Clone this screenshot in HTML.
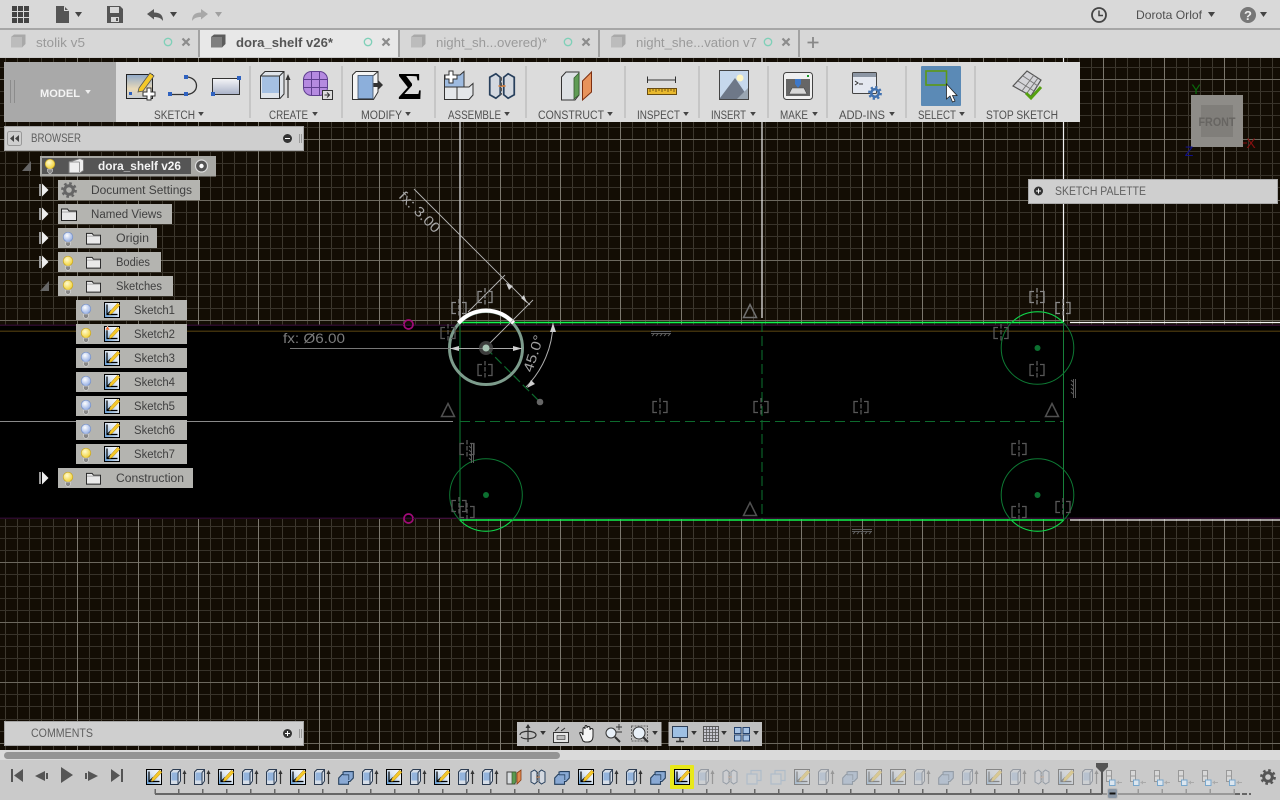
<!DOCTYPE html>
<html><head><meta charset="utf-8"><title>dora_shelf v26</title>
<style>
html,body{margin:0;padding:0;background:#000;overflow:hidden}
svg{display:block}
text{font-family:"Liberation Sans",sans-serif}
.tb{font-size:11.5px;fill:#505050}
.br{font-size:11.5px;fill:#404040}
.pn{font-size:11.5px;fill:#5f5f5f}
.dm{font-size:14px}
</style></head><body>
<svg width="1280" height="800" viewBox="0 0 1280 800" xmlns="http://www.w3.org/2000/svg">
<defs>
<linearGradient id="gs" x1="0" y1="1" x2="1" y2="0"><stop offset="0" stop-color="#5c9bd8"/><stop offset=".55" stop-color="#dfe8f2"/><stop offset="1" stop-color="#fff"/></linearGradient>
<linearGradient id="gt" x1="0" y1="0" x2="0" y2="1"><stop offset="0" stop-color="#f6f6f8"/><stop offset="1" stop-color="#a9b2c8"/></linearGradient>
<linearGradient id="gsk" x1="0" y1="0" x2="0" y2="1"><stop offset="0" stop-color="#8fa9c9"/><stop offset=".6" stop-color="#e9d9b8"/><stop offset="1" stop-color="#c4ccd4"/></linearGradient>
<radialGradient id="gby" cx=".4" cy=".35" r=".7"><stop offset="0" stop-color="#fffbd0"/><stop offset="1" stop-color="#f1cf2c"/></radialGradient>
<radialGradient id="gbb" cx=".4" cy=".35" r=".7"><stop offset="0" stop-color="#fff"/><stop offset="1" stop-color="#8ea9e2"/></radialGradient>

<symbol id="sk" viewBox="0 0 16 16"><rect x=".5" y=".5" width="15" height="15" fill="url(#gs)" stroke="#000"/><path d="M3 2.5V12.5H13.5" fill="none" stroke="#000" stroke-width="1.2"/><path d="M3.5 12L7 8.5" stroke="#000"/><path d="M6 9.5L13.5 1.2 16 3.2 8 11.5 5.5 12.5Z" fill="#f5c92a" stroke="#b08010" stroke-width=".5"/></symbol>
<symbol id="sk2" viewBox="0 0 16 16"><rect x=".5" y=".5" width="15" height="15" fill="url(#gs)" stroke="#000"/><path d="M3 2.5V12.5H13.5" fill="none" stroke="#000" stroke-width="1.2"/><path d="M6 9.5L13.5 1.2 16 3.2 8 11.5 5.5 12.5Z" fill="#f5c92a" stroke="#b08010" stroke-width=".5"/><path d="M1 4L3.5 0 6 4Z" fill="#e86a30" stroke="#fff" stroke-width=".5"/></symbol>
<symbol id="ex" viewBox="0 0 20 16"><path d="M.5 3L3 .5H10.5V12L8 15.5H.5Z" fill="#d6dee8" stroke="#2c3c52"/><path d="M1.5 3.5H8V11.500H1.500Z" fill="#94b4dc"/><path d="M8 3.500V15M8 3.500L10.500 .8" stroke="#2c3c52" fill="none"/><path d="M14.500 15V2.500" stroke="#333" stroke-width="1.200"/><path d="M12.500 5L14.500 1 16.500 5Z" fill="#333"/></symbol>
<symbol id="cb" viewBox="0 0 16 14"><path d="M.7 7L4 3.500H5V1L6.500 .6H15.300V7L12 10.500H10.500V13.300H.7Z" fill="#89a9d4" stroke="#25405f" stroke-width="1.100"/><path d="M5 3.800H10.800V9" fill="none" stroke="#25405f" stroke-width=".8"/></symbol>
<symbol id="cube2" viewBox="0 0 16 16"><rect x="5" y="1.500" width="10" height="10" fill="none" stroke="#7aa0c8" stroke-width="1.200"/><rect x="1" y="5" width="10" height="10" fill="#d0d4d8" stroke="#7aa0c8" stroke-width="1.200"/></symbol>
<symbol id="jt" viewBox="0 0 16 16"><path d="M1 3L4.500 1 7 3V13L4.500 15 1 13Z" fill="#d4d9e0" stroke="#28405c"/><path d="M9 3L11.500 1 15 3V13L11.500 15 9 13Z" fill="#d4d9e0" stroke="#28405c"/><path d="M6 8H10" stroke="#d08040"/><path d="M7.500 3V13" stroke="#555" stroke-dasharray="2 1"/></symbol>
<symbol id="cs" viewBox="0 0 16 16"><path d="M1 3H9V15H1Z" fill="#d9dde0" stroke="#444"/><path d="M6 3H10V13L8 15H6Z" fill="#5a9a50" stroke="#3a5a30" stroke-width=".7"/><path d="M11 4L15 1V11L11 15Z" fill="#e08a50" stroke="#8a3a10" stroke-width=".8"/></symbol>
<symbol id="grp" viewBox="0 0 18 16"><rect x=".5" y=".5" width="5" height="5.500" fill="#d8d8d8" stroke="#999"/><rect x=".5" y="6" width="5" height="5.500" fill="#d8d8d8" stroke="#999"/><rect x="3.500" y="10" width="5.500" height="5.500" fill="#dce6ef" stroke="#78a7cc"/><path d="M10.500 12.500H16" stroke="#aaa"/><path d="M13 10.500V14.500L10.500 12.500Z" fill="#aaa"/></symbol>
<symbol id="by" viewBox="0 0 12 16"><circle cx="6" cy="6" r="4.800" fill="url(#gby)" stroke="#c7a520" stroke-width=".7"/><path d="M3.500 11H8.500V13.500L7 15.500H5L3.500 13.500Z" fill="#888" stroke="#eee" stroke-width=".5"/></symbol>
<symbol id="bb" viewBox="0 0 12 16"><circle cx="6" cy="6" r="4.800" fill="url(#gbb)" stroke="#7490c8" stroke-width=".7"/><path d="M3.500 11H8.500V13.500L7 15.500H5L3.500 13.500Z" fill="#888" stroke="#eee" stroke-width=".5"/></symbol>
<symbol id="fo" viewBox="0 0 16 13"><path d="M.5 1H6.500L8 3H15.500V12.500H.5Z" fill="#e9e9e9" stroke="#222"/><path d="M1 4H15" stroke="#aaa"/></symbol>
<symbol id="tr" viewBox="0 0 10 14"><path d="M0 1H2V13H0Z" fill="#999"/><path d="M3 0.500L9.500 7 3 13.500Z" fill="#eee"/></symbol>
<symbol id="c" viewBox="0 0 16 18"><g fill="none" stroke="currentColor" stroke-width="1.300"><path d="M5 3.500H1V14.500H5M11 3.500H15V14.500H11"/><path d="M8 0V18" stroke-dasharray="4.500 1.500"/></g></symbol>
<symbol id="cube" viewBox="0 0 16 14"><path d="M1 3L4 .5H15.500V10L12 13.500H1Z" fill="currentColor"/><path d="M1 3H12V13.500H1Z" fill="#fff" fill-opacity=".22"/></symbol>
<symbol id="gear" viewBox="0 0 16 16"><circle cx="8" cy="8" r="6.700" fill="none" stroke="currentColor" stroke-width="2.400" stroke-dasharray="2.600 2.660"/><circle cx="8" cy="8" r="4.300" fill="none" stroke="currentColor" stroke-width="3"/></symbol>
<symbol id="dn" viewBox="0 0 7 5"><path d="M0 0H7L3.500 5Z" fill="currentColor"/></symbol>
</defs>

<!-- canvas -->
<rect x="0" y="58" width="1280" height="692" fill="#130d04"/>
<path stroke="#3d382e" fill="none" d="M5.500 58V750M17.500 58V750M29.500 58V750M41.500 58V750M53.500 58V750M65.500 58V750M89.500 58V750M101.500 58V750M113.500 58V750M126.500 58V750M150.500 58V750M162.500 58V750M174.500 58V750M186.500 58V750M210.500 58V750M222.500 58V750M234.500 58V750M246.500 58V750M270.500 58V750M282.500 58V750M295.500 58V750M307.500 58V750M331.500 58V750M343.500 58V750M355.500 58V750M367.500 58V750M391.500 58V750M403.500 58V750M415.500 58V750M427.500 58V750M451.500 58V750M463.500 58V750M476.500 58V750M488.500 58V750M512.500 58V750M524.500 58V750M536.500 58V750M548.500 58V750M572.500 58V750M584.500 58V750M596.500 58V750M608.500 58V750M632.500 58V750M645.500 58V750M657.500 58V750M669.500 58V750M693.500 58V750M705.500 58V750M717.500 58V750M729.500 58V750M753.500 58V750M765.500 58V750M777.500 58V750M789.500 58V750M814.500 58V750M826.500 58V750M838.500 58V750M850.500 58V750M874.500 58V750M886.500 58V750M898.500 58V750M910.500 58V750M934.500 58V750M946.500 58V750M958.500 58V750M970.500 58V750M995.500 58V750M1007.500 58V750M1019.500 58V750M1031.500 58V750M1055.500 58V750M1067.500 58V750M1079.500 58V750M1091.500 58V750M1115.500 58V750M1127.500 58V750M1139.500 58V750M1151.500 58V750M1176.500 58V750M1188.500 58V750M1200.500 58V750M1212.500 58V750M1236.500 58V750M1248.500 58V750M1260.500 58V750M1272.500 58V750"/>
<path stroke="#38332a" fill="none" d="M0 67.500H1280M0 91.500H1280M0 103.500H1280M0 115.500H1280M0 127.500H1280M0 151.500H1280M0 163.500H1280M0 175.500H1280M0 187.500H1280M0 212.500H1280M0 224.500H1280M0 236.500H1280M0 248.500H1280M0 272.500H1280M0 284.500H1280M0 296.500H1280M0 308.500H1280M0 526.500H1280M0 538.500H1280M0 550.500H1280M0 574.500H1280M0 586.500H1280M0 598.500H1280M0 610.500H1280M0 634.500H1280M0 646.500H1280M0 658.500H1280M0 670.500H1280M0 694.500H1280M0 706.500H1280M0 719.500H1280M0 731.500H1280"/>
<path stroke="#6c685e" fill="none" d="M0 79.500H1280M0 139.500H1280M0 200.500H1280M0 260.500H1280M0 320.500H1280M0 562.500H1280M0 622.500H1280M0 682.500H1280M0 743.500H1280"/>
<path stroke="#7c786e" fill="none" d="M77.500 58V750M138.500 58V750M198.500 58V750M258.500 58V750M319.500 58V750M379.500 58V750M439.500 58V750M500.500 58V750M560.500 58V750M620.500 58V750M681.500 58V750M741.500 58V750M801.500 58V750M862.500 58V750M922.500 58V750M983.500 58V750M1043.500 58V750M1103.500 58V750M1164.500 58V750M1224.500 58V750"/>
<rect x="0" y="326" width="1280" height="192" fill="#000"/>
<rect x="0" y="324.500" width="1280" height="1.500" fill="#2a0a2a"/>
<rect x="0" y="330.500" width="1280" height="1.500" fill="#3f300c"/>
<rect x="0" y="517.500" width="1280" height="1.500" fill="#2a0a2a"/>

<!-- sketch lines -->
<g fill="none">
<path d="M460 58V322" stroke="#c0c0c0" stroke-width="1.500"/>
<path d="M762 58V318M1063.500 58V322" stroke="#f0f0f0" stroke-width="1.200"/>
<path d="M0 421.500H453" stroke="#8a8a8a"/>
<path d="M1070 322.500H1280M1070 520H1280" stroke="#f4f4f4" stroke-width="1.300"/>
<path d="M460 322V520" stroke="#0c6a2c" stroke-width="1.200"/>
<path d="M1063.500 322V520" stroke="#17803a"/>
<path d="M762 322V520" stroke="#0c6a2c" stroke-dasharray="10 4" stroke-width="1.100"/>
<path d="M460 421.500H1063" stroke="#0d6a2d" stroke-dasharray="10 5"/>
<path d="M460 322.500H1063M460 520H1063" stroke="#10f44e" stroke-width="1.600"/>
<circle cx="1037.500" cy="348" r="36.300" stroke="#0e7a34"/>
<circle cx="486" cy="495" r="36.300" stroke="#0e7a34"/>
<circle cx="1037.500" cy="495" r="36.300" stroke="#0e7a34"/>
<path d="M459.700 520A36.300 36.300 0 0 0 512.300 520M1011.200 520A36.300 36.300 0 0 0 1063.800 520" stroke="#10d84a"/>
<path d="M1011.700 322.500A36.300 36.300 0 0 1 1063.300 322.500" stroke="#10d84a"/>
<path d="M486 348L540 402" stroke="#0d6a2d" stroke-dasharray="9 4" stroke-width="1.200"/>
<circle cx="486" cy="348" r="36.500" stroke="#7d9c8c" stroke-width="3"/>
<path d="M458.500 323A36.500 36.500 0 0 1 513.500 323" stroke="#fff" stroke-width="4"/>
<path d="M414 189L530 305M505 275L468 312M533 300L490 343" stroke="#b4b4b4" stroke-width=".9"/>
<path d="M290 348.500H450" stroke="#777"/>
<path d="M450 348.500H522" stroke="#aaa"/>
<path d="M553 323A93 93 0 0 1 526 387" stroke="#b0b0b0"/>
<circle cx="408.500" cy="324.500" r="4.500" stroke="#a00a78" stroke-width="1.700"/>
<circle cx="408.500" cy="518.500" r="4.500" stroke="#a00a78" stroke-width="1.700"/>
<path d="M404 324.500H390M413 518.500H456" stroke="#40103a"/>
</g>
<g fill="#cfcfcf">
<path d="M506 283L513 286 509 290Z M527 303L521 298 524 295Z"/>
<path d="M450 348.500L459 346V351Z M522 348.500L513 346V351Z"/>
<path d="M553 323L550 332H556Z M527 388L531 380 535 384Z"/>
</g>
<circle cx="486" cy="348" r="7" fill="#555" opacity=".7"/><circle cx="486" cy="348" r="3.500" fill="#a8c4b4"/>
<circle cx="540" cy="402" r="3.300" fill="#666"/>
<g fill="#0c7030"><circle cx="1037.500" cy="348" r="3"/><circle cx="486" cy="495" r="3"/><circle cx="1037.500" cy="495" r="3"/></g>

<g color="#8a8a8a">
<use href="#c" x="477" y="288" width="16" height="18"/><use href="#c" x="451" y="299" width="16" height="18"/>
<use href="#c" x="1029" y="288" width="16" height="18"/><use href="#c" x="1055" y="299" width="16" height="18"/>
</g>
<g color="#585858">
<use href="#c" x="440" y="324" width="16" height="18"/><use href="#c" x="477" y="361" width="16" height="18"/>
<use href="#c" x="993" y="324" width="16" height="18"/><use href="#c" x="1029" y="361" width="16" height="18"/>
<use href="#c" x="652" y="398" width="16" height="18"/><use href="#c" x="753" y="398" width="16" height="18"/><use href="#c" x="853" y="398" width="16" height="18"/>
<use href="#c" x="459" y="440" width="16" height="18"/><use href="#c" x="451" y="497" width="16" height="18"/><use href="#c" x="459" y="503" width="16" height="18"/>
<use href="#c" x="1011" y="440" width="16" height="18"/><use href="#c" x="1011" y="503" width="16" height="18"/><use href="#c" x="1055" y="498" width="16" height="18"/>
</g>
<g fill="none" stroke="#505050" stroke-width="1.500">
<path d="M750 304.500L756.500 317.500H743.500Z" stroke="#707070"/>
<path d="M448 403.500L454.500 416.500H441.500Z"/><path d="M1052 403.500L1058.500 416.500H1045.500Z"/><path d="M750 502.500L756.500 515.500H743.500Z"/>
</g>
<g stroke="#5c5c5c" fill="none">
<path d="M651 331.500H671M651 333.500H671M652 336L654 334M656 336L658 334M660 336L662 334M664 336L666 334M668 336L670 334"/>
<path d="M852 529.500H872M852 531.500H872M853 534L855 532M857 534L859 532M861 534L863 532M865 534L867 532M869 534L871 532"/>
<path d="M1075.500 379V398M1073.500 379V398M1071 380L1073 382M1071 384L1073 386M1071 388L1073 390M1071 392L1073 394"/>
<path d="M473.500 443V463M471.500 443V463M469 446L471 448M469 450L471 452M469 454L471 456M469 458L471 460"/>
</g>

<text class="dm" x="283" y="343" textLength="62" lengthAdjust="spacingAndGlyphs" fill="#7c7c7c">fx: Ø6.00</text>
<text class="dm" transform="translate(398 197) rotate(45)" textLength="52" lengthAdjust="spacingAndGlyphs" fill="#a8a8a8">fx: 3.00</text>
<text class="dm" transform="translate(532 373) rotate(-72)" textLength="38" lengthAdjust="spacingAndGlyphs" fill="#a0a0a0">45.0°</text>

<!-- view cube -->
<rect x="1191" y="95" width="52" height="52" fill="#8e8c88"/>
<rect x="1201" y="105" width="32" height="32" fill="#807e7a"/>
<text x="1217" y="126" text-anchor="middle" font-size="12" font-weight="bold" fill="#676562" textLength="37" lengthAdjust="spacingAndGlyphs">FRONT</text>
<text x="1196" y="94" font-size="14" fill="#0a6a0a" text-anchor="middle">Y</text>
<text x="1251" y="148" font-size="14" fill="#8a1010" text-anchor="middle">X</text>
<text x="1189" y="156" font-size="14" fill="#10108a" text-anchor="middle">Z</text>
<path d="M1243 143H1247" stroke="#8a1010"/>

<!-- top bar -->
<rect x="0" y="0" width="1280" height="28" fill="#d9d9d9"/>
<rect x="0" y="28" width="1280" height="2" fill="#a6a6a6"/>
<rect x="0" y="30" width="1280" height="27" fill="#d7d7d7"/>
<rect x="200" y="30" width="198" height="27" fill="#e8e8e8"/>
<rect x="0" y="57" width="1280" height="1" fill="#fff" opacity=".8"/>
<g fill="#a2a2a2"><rect x="198" y="30" width="2" height="27"/><rect x="398" y="30" width="2" height="27"/><rect x="598" y="30" width="2" height="27"/><rect x="798" y="30" width="2" height="27"/></g>
<g fill="#444"><rect x="12" y="6" width="5" height="5"/><rect x="18" y="6" width="5" height="5"/><rect x="24" y="6" width="5" height="5"/><rect x="12" y="12" width="5" height="5"/><rect x="18" y="12" width="5" height="5"/><rect x="24" y="12" width="5" height="5"/><rect x="12" y="18" width="5" height="5"/><rect x="18" y="18" width="5" height="5"/><rect x="24" y="18" width="5" height="5"/></g>
<path d="M56 6H64L69 11V23H56Z" fill="#555"/><path d="M64.500 6.500V10.500H68.500" fill="none" stroke="#ddd"/>
<use href="#dn" x="75" y="12" width="7" height="5" color="#444"/>
<path d="M107 6H120L123 9V23H107Z" fill="#555"/><rect x="110" y="7" width="9" height="6" fill="#d9d9d9"/><rect x="111" y="17" width="8" height="5" fill="#d9d9d9"/><rect x="116" y="18" width="2" height="3" fill="#555"/>
<path d="M147 14L154 9V12.500C160 12.500 163 15 163 21 161 18 158 17 154 17V19.500Z" fill="#555"/>
<use href="#dn" x="170" y="12" width="7" height="5" color="#444"/>
<path d="M208 14L201 9V12.500C195 12.500 192 15 192 21 194 18 197 17 201 17V19.500Z" fill="#a8a8a8"/>
<use href="#dn" x="215" y="12" width="7" height="5" color="#a0a0a0"/>
<circle cx="1099" cy="15" r="7" fill="none" stroke="#444" stroke-width="1.800"/><path d="M1099 10.500V15.500H1103" fill="none" stroke="#444" stroke-width="1.500"/>
<text x="1136" y="19" class="tb" style="font-size:12px" textLength="66" lengthAdjust="spacingAndGlyphs">Dorota Orlof</text>
<use href="#dn" x="1208" y="12" width="7" height="5" color="#444"/>
<circle cx="1248" cy="15" r="8" fill="#777"/><text x="1248" y="20" font-size="13" font-weight="bold" text-anchor="middle" fill="#eee">?</text>
<use href="#dn" x="1260" y="12" width="7" height="5" color="#444"/>

<!-- tabs -->
<use href="#cube" x="10" y="34" width="16" height="14" color="#a9a9a9"/>
<text x="36" y="47" font-size="12.500" fill="#9a9a9a" textLength="49" lengthAdjust="spacingAndGlyphs">stolik v5</text>
<use href="#cube" x="210" y="34" width="16" height="14" color="#5c5c5c"/>
<text x="236" y="47" font-size="12.500" font-weight="bold" fill="#555" textLength="97" lengthAdjust="spacingAndGlyphs">dora_shelf v26*</text>
<use href="#cube" x="410" y="34" width="16" height="14" color="#a9a9a9"/>
<text x="436" y="47" font-size="12.500" fill="#9a9a9a" textLength="111" lengthAdjust="spacingAndGlyphs">night_sh...overed)*</text>
<use href="#cube" x="610" y="34" width="16" height="14" color="#a9a9a9"/>
<text x="636" y="47" font-size="12.500" fill="#9a9a9a" textLength="121" lengthAdjust="spacingAndGlyphs">night_she...vation v7</text>
<g fill="none" stroke="#7fd0b8" stroke-width="1.300"><circle cx="168" cy="42" r="3.700"/><circle cx="368" cy="42" r="3.700"/><circle cx="568" cy="42" r="3.700"/><circle cx="768" cy="42" r="3.700"/></g>
<g fill="none" stroke="#8c8c8c" stroke-width="2.200"><path d="M182.500 38.500L189.500 45.500M189.500 38.500L182.500 45.500"/><path d="M382.500 38.500L389.500 45.500M389.500 38.500L382.500 45.500"/><path d="M582.500 38.500L589.500 45.500M589.500 38.500L582.500 45.500"/><path d="M782.500 38.500L789.500 45.500M789.500 38.500L782.500 45.500"/></g>
<path d="M813 37V48M807.500 42.500H818.500" stroke="#888" stroke-width="1.800"/>

<!-- toolbar -->
<rect x="4" y="62" width="1076" height="60" fill="#dcdcdc"/>
<rect x="4" y="62" width="112" height="60" fill="#a9a9a9"/>
<path d="M10.500 80V103M14.500 80V103" stroke="#8c8c8c"/>
<text x="40" y="97" font-size="11" font-weight="bold" fill="#f4f4f4" textLength="40" lengthAdjust="spacingAndGlyphs">MODEL</text>
<use href="#dn" x="85" y="90" width="6" height="4" color="#eee"/>
<g fill="#c6c6c6"><rect x="249" y="66" width="2" height="52"/><rect x="341" y="66" width="2" height="52"/><rect x="434" y="66" width="2" height="52"/><rect x="525" y="66" width="2" height="52"/><rect x="624" y="66" width="2" height="52"/><rect x="698" y="66" width="2" height="52"/><rect x="767" y="66" width="2" height="52"/><rect x="826" y="66" width="2" height="52"/><rect x="905" y="66" width="2" height="52"/><rect x="974" y="66" width="2" height="52"/></g>

<!-- sketch create -->
<rect x="126.500" y="74.500" width="26" height="24" fill="url(#gsk)" stroke="#222" stroke-width="1"/>
<rect x="129" y="92" width="3" height="3" fill="#2f62c0"/>
<path d="M139 88L150 73 154 76 143 91 138 92Z" fill="#f5c92a" stroke="#555" stroke-width=".8"/>
<path d="M147 88H151V92H155V96H151V100H147V96H143V92H147Z" fill="#fff" stroke="#333"/>
<path d="M171 94.500H186C200 94.500 200 77 186 77" fill="none" stroke="#333" stroke-width="1.300"/>
<g fill="#2f62c0"><rect x="168" y="92" width="4" height="4"/><rect x="184" y="92" width="4" height="4"/><rect x="184" y="75" width="4" height="4"/></g>
<rect x="212.500" y="78.500" width="27" height="16" fill="url(#gt)" stroke="#333"/>
<rect x="211" y="92" width="4" height="4" fill="#2f62c0"/><rect x="237" y="76" width="4" height="4" fill="#2f62c0"/>
<!-- create -->
<path d="M260.500 76L265 71.500H284V94L280 98.500H260.500Z" fill="#dfe4ea" stroke="#333"/>
<path d="M262 76H279V93H262Z" fill="#a5c0e2"/><path d="M279.500 76V98M279.500 76L284 71.500M260.500 76H279.500" stroke="#333" fill="none"/>
<path d="M288 98V77" stroke="#333" stroke-width="1.200"/><path d="M285.500 80L288 74 290.500 80Z" fill="#333"/>
<rect x="303.500" y="71.500" width="24" height="24" rx="8" fill="#b58ae0" stroke="#5f3f8f"/>
<path d="M303.500 79.500H327.500M303.500 87.500H327.500M311.500 71.500V95.500M319.500 71.500V95.500" stroke="#5f3f8f"/>
<rect x="322.500" y="90.500" width="10" height="9" fill="#ddd" stroke="#333"/><path d="M324.500 95H329M327 92.500L329.500 95 327 97.500" fill="none" stroke="#333"/>
<!-- modify -->
<path d="M352.500 75L356 71.500H378V92L373.500 99.500H352.500Z" fill="#f4f4f4" stroke="#333"/>
<rect x="358" y="75.500" width="15" height="23" fill="#8cafdb" stroke="#3c4e66" stroke-width=".8"/>
<path d="M373.500 75.500L378 71.500" stroke="#333"/><path d="M373.500 83H378V80L383 85 378 90V87H373.500Z" fill="#333"/>
<text x="410" y="99" font-size="38" font-weight="bold" text-anchor="middle" fill="#000" style="font-family:'Liberation Serif',serif">Σ</text>
<!-- assemble -->
<path d="M444.500 87H457V99.500H444.500Z" fill="#e4e7ea" stroke="#333"/>
<path d="M457 87H469L473 83.500V95L469 99.500H457Z" fill="#e4e7ea" stroke="#333"/>
<path d="M444.500 75H460L464 71.500V87H444.500Z" fill="#9ebbe0" stroke="#333"/>
<path d="M449 71H453V75H457V79H453V83H449V79H445V75H449Z" fill="#fff" stroke="#333"/>
<use href="#jt" x="488" y="72" width="28" height="28"/>
<!-- construct -->
<path d="M561.500 77L566 72H579V95L575 100H561.500Z" fill="#dde1e4" stroke="#333"/>
<path d="M574 78L579 73V95L574 99Z" fill="#5f9c55" stroke="#345a2f" stroke-width=".8"/>
<path d="M582.500 81L591.500 72V92L582.500 100Z" fill="#e8935c" stroke="#7e2f10"/>
<!-- inspect -->
<path d="M647.500 76.500V83M675.500 76.500V83M647.500 80H675.500" fill="none" stroke="#333"/>
<rect x="647.500" y="88.500" width="29" height="6" fill="#e9b92e" stroke="#6a4c10"/>
<path d="M650 89V92M653 89V91M656 89V92M659 89V91M662 89V92M665 89V91M668 89V92M671 89V91M674 89V92" stroke="#7c5a12"/>
<!-- insert -->
<rect x="719.500" y="70.500" width="29" height="29" fill="#c6d8ec" stroke="#444"/>
<path d="M720 98L735 78 748 97V99H720Z" fill="#6e7888"/><path d="M737 99L748 88V99Z" fill="#9aa6b2"/>
<circle cx="740" cy="78" r="3.500" fill="#fff7c4"/>
<!-- make -->
<rect x="783.500" y="72.500" width="29" height="27" rx="3" fill="#f0f0f0" stroke="#444"/>
<rect x="786" y="79" width="24" height="17" fill="#666"/>
<path d="M795 79H801V84L798 88 795 84Z" fill="#3e78c8"/><path d="M789 94L792 88H804L807 94Z" fill="#d8d8d8" stroke="#444" stroke-width=".6"/>
<rect x="807" y="75" width="2" height="2" fill="#1a9a2a"/>
<!-- add-ins -->
<rect x="852.500" y="72.500" width="24" height="21" rx="1" fill="#e4e8f0" stroke="#444"/><rect x="853" y="73" width="23" height="4" fill="#8c96a4"/>
<path d="M855 81L858 83 855 85M859 84H863" fill="none" stroke="#333"/>
<use href="#gear" x="868" y="86" width="14" height="14" color="#4272b0"/>
<!-- select -->
<rect x="921" y="66" width="40" height="40" fill="#5b8ab6" rx="1"/>
<rect x="926" y="71" width="20.500" height="14" fill="none" stroke="#5c9a14" stroke-width="1.600"/>
<path d="M946.500 84V99L950 96 952.500 102 955 101 952.500 95.500H957Z" fill="#fff" stroke="#222" stroke-width=".8"/>
<!-- stop -->
<path d="M1013 86L1027 71 1041 80 1031 96Z" fill="#d4d4d8" stroke="#555" stroke-width="1.200"/>
<path d="M1018 81L1034 91M1023 76L1038 86M1022 91L1034 75M1027 93L1038 78" stroke="#777"/>
<path d="M1026 93L1031 98 1041 87" fill="none" stroke="#55a010" stroke-width="3"/>
<!-- labels -->
<text x="154" y="119" class="tb" textLength="41" lengthAdjust="spacingAndGlyphs">SKETCH</text><use href="#dn" x="198" y="112" width="6" height="4" color="#444"/>
<text x="269" y="119" class="tb" textLength="39" lengthAdjust="spacingAndGlyphs">CREATE</text><use href="#dn" x="312" y="112" width="6" height="4" color="#444"/>
<text x="361" y="119" class="tb" textLength="41" lengthAdjust="spacingAndGlyphs">MODIFY</text><use href="#dn" x="405" y="112" width="6" height="4" color="#444"/>
<text x="448" y="119" class="tb" textLength="53" lengthAdjust="spacingAndGlyphs">ASSEMBLE</text><use href="#dn" x="504" y="112" width="6" height="4" color="#444"/>
<text x="538" y="119" class="tb" textLength="66" lengthAdjust="spacingAndGlyphs">CONSTRUCT</text><use href="#dn" x="607" y="112" width="6" height="4" color="#444"/>
<text x="637" y="119" class="tb" textLength="43" lengthAdjust="spacingAndGlyphs">INSPECT</text><use href="#dn" x="683" y="112" width="6" height="4" color="#444"/>
<text x="711" y="119" class="tb" textLength="35" lengthAdjust="spacingAndGlyphs">INSERT</text><use href="#dn" x="750" y="112" width="6" height="4" color="#444"/>
<text x="780" y="119" class="tb" textLength="28" lengthAdjust="spacingAndGlyphs">MAKE</text><use href="#dn" x="812" y="112" width="6" height="4" color="#444"/>
<text x="839" y="119" class="tb" textLength="46" lengthAdjust="spacingAndGlyphs">ADD-INS</text><use href="#dn" x="889" y="112" width="6" height="4" color="#444"/>
<text x="918" y="119" class="tb" textLength="38" lengthAdjust="spacingAndGlyphs">SELECT</text><use href="#dn" x="959" y="112" width="6" height="4" color="#444"/>
<text x="986" y="119" class="tb" textLength="72" lengthAdjust="spacingAndGlyphs">STOP SKETCH</text>

<!-- sketch palette -->
<rect x="1028.500" y="179.500" width="249" height="24" fill="#cfcfcf" stroke="#aaa"/>
<circle cx="1038.500" cy="191" r="4.500" fill="#333"/><path d="M1036 191H1041M1038.500 188.500V193.500" stroke="#fff"/>
<text x="1055" y="195" class="pn" textLength="91" lengthAdjust="spacingAndGlyphs">SKETCH PALETTE</text>

<!-- browser -->
<rect x="4.500" y="126.500" width="299" height="24" fill="#cfcfcf" stroke="#a6a6a6"/>
<rect x="7.500" y="131.500" width="14" height="14" rx="2" fill="none" stroke="#999"/>
<path d="M14 135V142L10 138.500ZM19 135V142L15 138.500Z" fill="#444"/>
<text x="31" y="142" class="pn" textLength="50" lengthAdjust="spacingAndGlyphs">BROWSER</text>
<circle cx="287.500" cy="138.500" r="4.500" fill="#333"/><path d="M285 138.500H290" stroke="#fff"/>
<path d="M299.500 134V143M301.500 134V143" stroke="#999"/>

<g fill="#b4b4b0">
<rect x="40" y="156" width="176" height="20.500" fill="#a8a8a4"/>
<rect x="58" y="180" width="142" height="20"/><rect x="58" y="204" width="114" height="20"/><rect x="58" y="228" width="99" height="20"/><rect x="58" y="252" width="103" height="20"/><rect x="58" y="276" width="115" height="20"/>
<rect x="76" y="300" width="111" height="20"/><rect x="76" y="324" width="111" height="20"/><rect x="76" y="348" width="111" height="20"/><rect x="76" y="372" width="111" height="20"/><rect x="76" y="396" width="111" height="20"/><rect x="76" y="420" width="111" height="20"/><rect x="76" y="444" width="111" height="20"/>
<rect x="58" y="468" width="135" height="20"/>
</g>
<rect x="42" y="158" width="149" height="16" fill="#555"/>
<path d="M22 171L31 161V171Z" fill="#666"/><path d="M40 291L49 281V291Z" fill="#666"/>
<use href="#by" x="44" y="158" width="12" height="16"/>
<path d="M69 162L80 158.500 83.500 160V170.500L80 173H69Z" fill="#eee" stroke="#777"/><path d="M79.500 162V172M69 162H79.500" stroke="#999"/>
<text x="98" y="170" font-size="11.500" font-weight="bold" fill="#f4f4f4" textLength="83" lengthAdjust="spacingAndGlyphs">dora_shelf v26</text>
<circle cx="201.500" cy="166" r="6" fill="#555" stroke="#ddd" stroke-width="1.200"/><circle cx="201.500" cy="166" r="2.200" fill="#fff"/>

<use href="#tr" x="39" y="183" width="10" height="14"/><use href="#tr" x="39" y="207" width="10" height="14"/><use href="#tr" x="39" y="231" width="10" height="14"/><use href="#tr" x="39" y="255" width="10" height="14"/><use href="#tr" x="39" y="471" width="10" height="14"/>
<use href="#gear" x="61" y="182" width="16" height="16" color="#666"/>
<use href="#fo" x="61" y="208" width="16" height="13"/>
<use href="#bb" x="62" y="231" width="12" height="16"/><use href="#fo" x="86" y="232" width="15" height="13"/>
<use href="#by" x="62" y="255" width="12" height="16"/><use href="#fo" x="86" y="256" width="15" height="13"/>
<use href="#by" x="62" y="279" width="12" height="16"/><use href="#fo" x="86" y="280" width="15" height="13"/>
<use href="#by" x="62" y="471" width="12" height="16"/><use href="#fo" x="86" y="472" width="15" height="13"/>
<use href="#bb" x="80" y="303" width="12" height="16"/><use href="#sk" x="104" y="302" width="16" height="16"/>
<use href="#by" x="80" y="327" width="12" height="16"/><use href="#sk2" x="104" y="326" width="16" height="16"/>
<use href="#bb" x="80" y="351" width="12" height="16"/><use href="#sk" x="104" y="350" width="16" height="16"/>
<use href="#bb" x="80" y="375" width="12" height="16"/><use href="#sk" x="104" y="374" width="16" height="16"/>
<use href="#bb" x="80" y="399" width="12" height="16"/><use href="#sk" x="104" y="398" width="16" height="16"/>
<use href="#bb" x="80" y="423" width="12" height="16"/><use href="#sk" x="104" y="422" width="16" height="16"/>
<use href="#by" x="80" y="447" width="12" height="16"/><use href="#sk" x="104" y="446" width="16" height="16"/>

<text class="br" x="91" y="194" textLength="101" lengthAdjust="spacingAndGlyphs">Document Settings</text>
<text class="br" x="91" y="218" textLength="71" lengthAdjust="spacingAndGlyphs">Named Views</text>
<text class="br" x="116" y="242" textLength="33" lengthAdjust="spacingAndGlyphs">Origin</text>
<text class="br" x="116" y="266" textLength="34" lengthAdjust="spacingAndGlyphs">Bodies</text>
<text class="br" x="116" y="290" textLength="46" lengthAdjust="spacingAndGlyphs">Sketches</text>
<text class="br" x="134" y="314" textLength="41" lengthAdjust="spacingAndGlyphs">Sketch1</text>
<text class="br" x="134" y="338" textLength="41" lengthAdjust="spacingAndGlyphs">Sketch2</text>
<text class="br" x="134" y="362" textLength="41" lengthAdjust="spacingAndGlyphs">Sketch3</text>
<text class="br" x="134" y="386" textLength="41" lengthAdjust="spacingAndGlyphs">Sketch4</text>
<text class="br" x="134" y="410" textLength="41" lengthAdjust="spacingAndGlyphs">Sketch5</text>
<text class="br" x="134" y="434" textLength="41" lengthAdjust="spacingAndGlyphs">Sketch6</text>
<text class="br" x="134" y="458" textLength="41" lengthAdjust="spacingAndGlyphs">Sketch7</text>
<text class="br" x="116" y="482" textLength="68" lengthAdjust="spacingAndGlyphs">Construction</text>

<!-- comments -->
<rect x="4.500" y="721.500" width="299" height="24" fill="#cfcfcf" stroke="#a6a6a6"/>
<text x="31" y="737" class="pn" textLength="62" lengthAdjust="spacingAndGlyphs">COMMENTS</text>
<circle cx="287.500" cy="733.500" r="4.500" fill="#333"/><path d="M285 733.500H290M287.500 731V736" stroke="#fff"/>
<path d="M299.500 729V738M301.500 729V738" stroke="#999"/>

<!-- nav bar -->
<rect x="517" y="722" width="144.500" height="24" fill="#c0c0c0"/>
<rect x="668.500" y="722" width="93.500" height="24" fill="#c0c0c0"/>
<path d="M528 725V742M520 735C520 730 536 730 536 735 536 739 524 740 521 737" fill="none" stroke="#333" stroke-width="1.200"/><path d="M525.500 728L528 724 530.500 728Z" fill="#333"/>
<use href="#dn" x="540" y="731" width="6" height="4" color="#333"/>
<rect x="553.500" y="732.500" width="15" height="10" fill="#e6e6e6" stroke="#333"/><rect x="557" y="735.500" width="8" height="4" fill="#bbb" stroke="#333" stroke-width=".6"/><path d="M555 731L559 727M561 731L565 728" stroke="#333"/>
<path d="M583 741L580 734C579 732 581 732 582 733L583 735V729C583 727 585 727 585 729V727C585 725 587 725 587 727V728C587 726 590 726 590 728V730C590 728 593 728 593 730V736C593 740 591 742 588 742H585Z" fill="#f5f5f5" stroke="#222"/>
<circle cx="611" cy="733" r="5" fill="#e8f0f8" stroke="#333"/><path d="M615 737L620 742" stroke="#333" stroke-width="2"/><path d="M616 727H622M619 724V730M616 732H622" stroke="#333" stroke-width=".9"/>
<rect x="631.500" y="726" width="16" height="15" fill="none" stroke="#666" stroke-dasharray="2 1"/><circle cx="639" cy="733" r="6" fill="#e8f0f8" stroke="#333"/><path d="M643 737L648 742" stroke="#333" stroke-width="2"/>
<use href="#dn" x="652" y="731" width="6" height="4" color="#333"/>
<rect x="672.500" y="726.500" width="15" height="11" fill="#9ec0e4" stroke="#2e3e56"/><path d="M680 738V741M676 741.500H684" stroke="#333" stroke-width="1.500"/>
<use href="#dn" x="691" y="731" width="6" height="4" color="#333"/>
<rect x="703.500" y="726.500" width="15" height="15" fill="#c8c8d0" stroke="#555"/><path d="M706.500 727V741M709.500 727V741M712.500 727V741M715.500 727V741M704 729.500H718M704 732.500H718M704 735.500H718M704 738.500H718" stroke="#555" stroke-width=".8"/>
<use href="#dn" x="721" y="731" width="6" height="4" color="#333"/>
<rect x="734.500" y="727.500" width="6.500" height="6" fill="#a6c2e4" stroke="#26436e"/><rect x="743" y="727.500" width="6.500" height="6" fill="#a6c2e4" stroke="#26436e"/><rect x="734.500" y="735" width="6.500" height="6" fill="#a6c2e4" stroke="#26436e"/><rect x="743" y="735" width="6.500" height="6" fill="#a6c2e4" stroke="#26436e"/>
<use href="#dn" x="753" y="731" width="6" height="4" color="#333"/>

<!-- timeline -->
<rect x="0" y="750" width="1280" height="50" fill="#cacaca"/>
<rect x="0" y="750" width="1280" height="10" fill="#dadada"/>
<rect x="4" y="752" width="556" height="7" rx="3.500" fill="#949494"/>
<g fill="#555">
<path d="M11 769H13V782H11ZM23 769V782L14 775.500Z"/>
<path d="M45 771V781L35 776ZM46 773H48V779H46Z"/>
<path d="M61 767V783L73 775Z"/>
<path d="M88 771V781L98 776ZM85 773H87V779H85Z"/>
<path d="M111 769V782L120 775.500ZM121 769H123V782H121Z"/>
</g>
<rect x="670" y="765" width="24" height="24" rx="1" fill="#e8e81a"/>
<use href="#sk" x="146" y="769" width="16" height="16"/><use href="#ex" x="170" y="769" width="20" height="16"/><use href="#ex" x="194" y="769" width="20" height="16"/><use href="#sk" x="218" y="769" width="16" height="16"/><use href="#ex" x="242" y="769" width="20" height="16"/><use href="#ex" x="266" y="769" width="20" height="16"/><use href="#sk" x="290" y="769" width="16" height="16"/><use href="#ex" x="314" y="769" width="20" height="16"/><use href="#cb" x="338" y="771" width="16" height="14"/><use href="#ex" x="362" y="769" width="20" height="16"/><use href="#sk" x="386" y="769" width="16" height="16"/><use href="#ex" x="410" y="769" width="20" height="16"/><use href="#sk" x="434" y="769" width="16" height="16"/><use href="#ex" x="458" y="769" width="20" height="16"/><use href="#ex" x="482" y="769" width="20" height="16"/><use href="#cs" x="506" y="769" width="16" height="16"/><use href="#jt" x="530" y="769" width="16" height="16"/><use href="#cb" x="554" y="771" width="16" height="14"/><use href="#sk" x="578" y="769" width="16" height="16"/><use href="#ex" x="602" y="769" width="20" height="16"/><use href="#ex" x="626" y="769" width="20" height="16"/><use href="#cb" x="650" y="771" width="16" height="14"/><use href="#sk" x="674" y="769" width="16" height="16"/>
<g opacity=".33">
<use href="#ex" x="698" y="769" width="20" height="16"/><use href="#jt" x="722" y="769" width="16" height="16"/><use href="#cube2" x="746" y="769" width="16" height="16"/><use href="#cube2" x="770" y="769" width="16" height="16"/><use href="#sk" x="794" y="769" width="16" height="16"/><use href="#ex" x="818" y="769" width="20" height="16"/><use href="#cb" x="842" y="771" width="16" height="14"/><use href="#sk" x="866" y="769" width="16" height="16"/><use href="#sk" x="890" y="769" width="16" height="16"/><use href="#ex" x="914" y="769" width="20" height="16"/><use href="#cb" x="938" y="771" width="16" height="14"/><use href="#ex" x="962" y="769" width="20" height="16"/><use href="#sk" x="986" y="769" width="16" height="16"/><use href="#ex" x="1010" y="769" width="20" height="16"/><use href="#jt" x="1034" y="769" width="16" height="16"/><use href="#sk" x="1058" y="769" width="16" height="16"/><use href="#ex" x="1082" y="769" width="20" height="16"/>
</g>
<use href="#grp" x="1106" y="770" width="18" height="16"/><use href="#grp" x="1130" y="770" width="18" height="16"/><use href="#grp" x="1154" y="770" width="18" height="16"/><use href="#grp" x="1178" y="770" width="18" height="16"/><use href="#grp" x="1202" y="770" width="18" height="16"/><use href="#grp" x="1226" y="770" width="18" height="16"/>
<rect x="155" y="793" width="947" height="2" fill="#666"/>
<rect x="154.500" y="789" width="1.500" height="5" fill="#666"/>
<path d="M178 791.500H1098" stroke="#666" stroke-width="5" stroke-dasharray="1.500 22.500"/>
<rect x="1102" y="793" width="133" height="2" fill="#999"/>
<path d="M1137.500 791.500H1238" stroke="#999" stroke-width="5" stroke-dasharray="1.500 22.500"/>
<path d="M1235 794H1251" stroke="#666" stroke-width="2" stroke-dasharray="5 2"/>
<path d="M1096 763H1108V767L1103 772V794H1101V772L1096 767Z" fill="#555"/>
<rect x="1107.500" y="788.500" width="10" height="10" rx="2" fill="#8a97a6" stroke="#bbb"/><rect x="1109.500" y="792.500" width="6" height="2" fill="#111"/>
<use href="#gear" x="1260" y="769" width="16" height="16" color="#555"/>
</svg>
</body></html>
